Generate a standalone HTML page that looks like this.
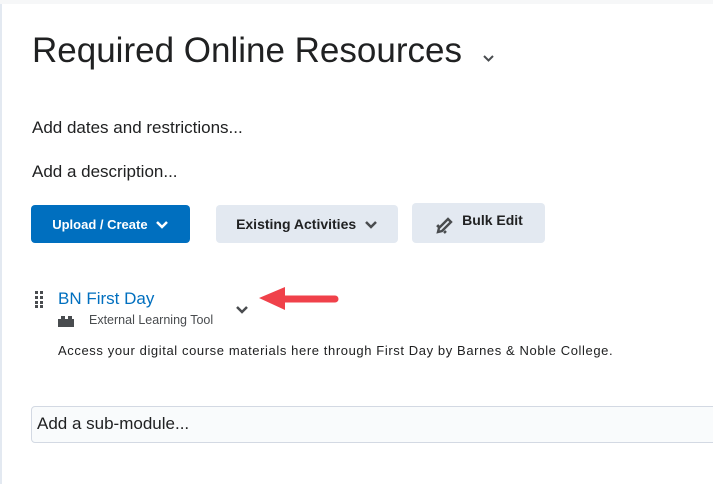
<!DOCTYPE html>
<html><head><style>
body{margin:0;width:713px;height:484px;background:#fff;font-family:"Liberation Sans",sans-serif;position:relative;overflow:hidden;color:#202122}
.top{position:absolute;left:0;top:0;width:713px;height:4px;background:#f6f7f8}
.lb{position:absolute;left:0;top:4px;width:2px;height:480px;background:#e3e9f1}
.a{position:absolute;white-space:nowrap}
.btn{position:absolute;border-radius:4px;font-size:13px;font-weight:bold;display:flex;align-items:center;justify-content:center}
</style></head><body>
<div class="top"></div><div class="lb"></div>
<div class="a" style="left:32px;top:31px;font-size:35px;">Required Online Resources</div>
<svg class="a" style="left:482px;top:54px" width="13" height="9"><path d="M2 2l4.5 4.5L11 2" stroke="#494c4f" stroke-width="2" fill="none"/></svg>
<div class="a" style="left:32px;top:118px;font-size:17px">Add dates and restrictions...</div>
<div class="a" style="left:32px;top:162px;font-size:17px">Add a description...</div>
<div class="btn" style="left:31px;top:205px;width:159px;height:38px;background:#006fbf;color:#fff">Upload / Create&nbsp;&nbsp;<svg width="14" height="9"><path d="M2 2l5 5 5-5" stroke="#fff" stroke-width="2.5" fill="none"/></svg></div>
<div class="btn" style="left:216px;top:205px;width:182px;height:38px;background:#e3e9f1;color:#202122;font-size:14px">Existing Activities&nbsp;&nbsp;<svg width="14" height="9"><path d="M2 2l5 5 5-5" stroke="#494c4f" stroke-width="2.5" fill="none"/></svg></div>
<div class="btn" style="left:412px;top:203px;width:133px;height:40px;background:#e3e9f1;color:#202122;font-size:14px"><svg width="20" height="20" style="margin-right:8px;margin-top:4px"><path d="M4 17l1-4 9-9 3 3-9 9z M3 12l2-2 M10 18l2-2" stroke="#494c4f" stroke-width="2.4" fill="none"/></svg><span style="margin-top:-6px">Bulk Edit</span></div>
<svg class="a" style="left:35px;top:291px" width="10" height="17"><g fill="#494c4f"><rect x="0" y="0" width="3" height="3"/><rect x="5" y="0" width="3" height="3"/><rect x="0" y="5" width="3" height="3"/><rect x="5" y="5" width="3" height="3"/><rect x="0" y="10" width="3" height="3"/><rect x="5" y="10" width="3" height="3"/><rect x="0" y="14" width="3" height="3"/><rect x="5" y="14" width="3" height="3"/></g></svg>
<div class="a" style="left:58px;top:289px;font-size:17px;color:#006fbf">BN First Day</div>
<svg class="a" style="left:57px;top:314px" width="18" height="14"><path d="M1 13V5h3V2h4v3h3V2h4v3h2v8z" fill="#494c4f"/></svg>
<div class="a" style="left:89px;top:313px;font-size:12.5px;color:#494c4f">External Learning Tool</div>
<svg class="a" style="left:235px;top:305px" width="14" height="9"><path d="M2 2l5 5 5-5" stroke="#494c4f" stroke-width="2.5" fill="none"/></svg>
<svg class="a" style="left:255px;top:284px" width="85" height="28"><path d="M80 15H20" stroke="#f0414a" stroke-width="7" stroke-linecap="round"/><path d="M4 14L30 3v23z" fill="#f0414a"/></svg>
<div class="a" style="left:58px;top:343px;font-size:13px;letter-spacing:0.6px;color:#202122">Access your digital course materials here through First Day by Barnes &amp; Noble College.</div>
<div class="a" style="left:31px;top:406px;width:690px;height:35px;border:1px solid #d3d9e3;border-radius:4px;background:#f9fbfc"></div>
<div class="a" style="left:37px;top:414px;font-size:17px">Add a sub-module...</div>
</body></html>
